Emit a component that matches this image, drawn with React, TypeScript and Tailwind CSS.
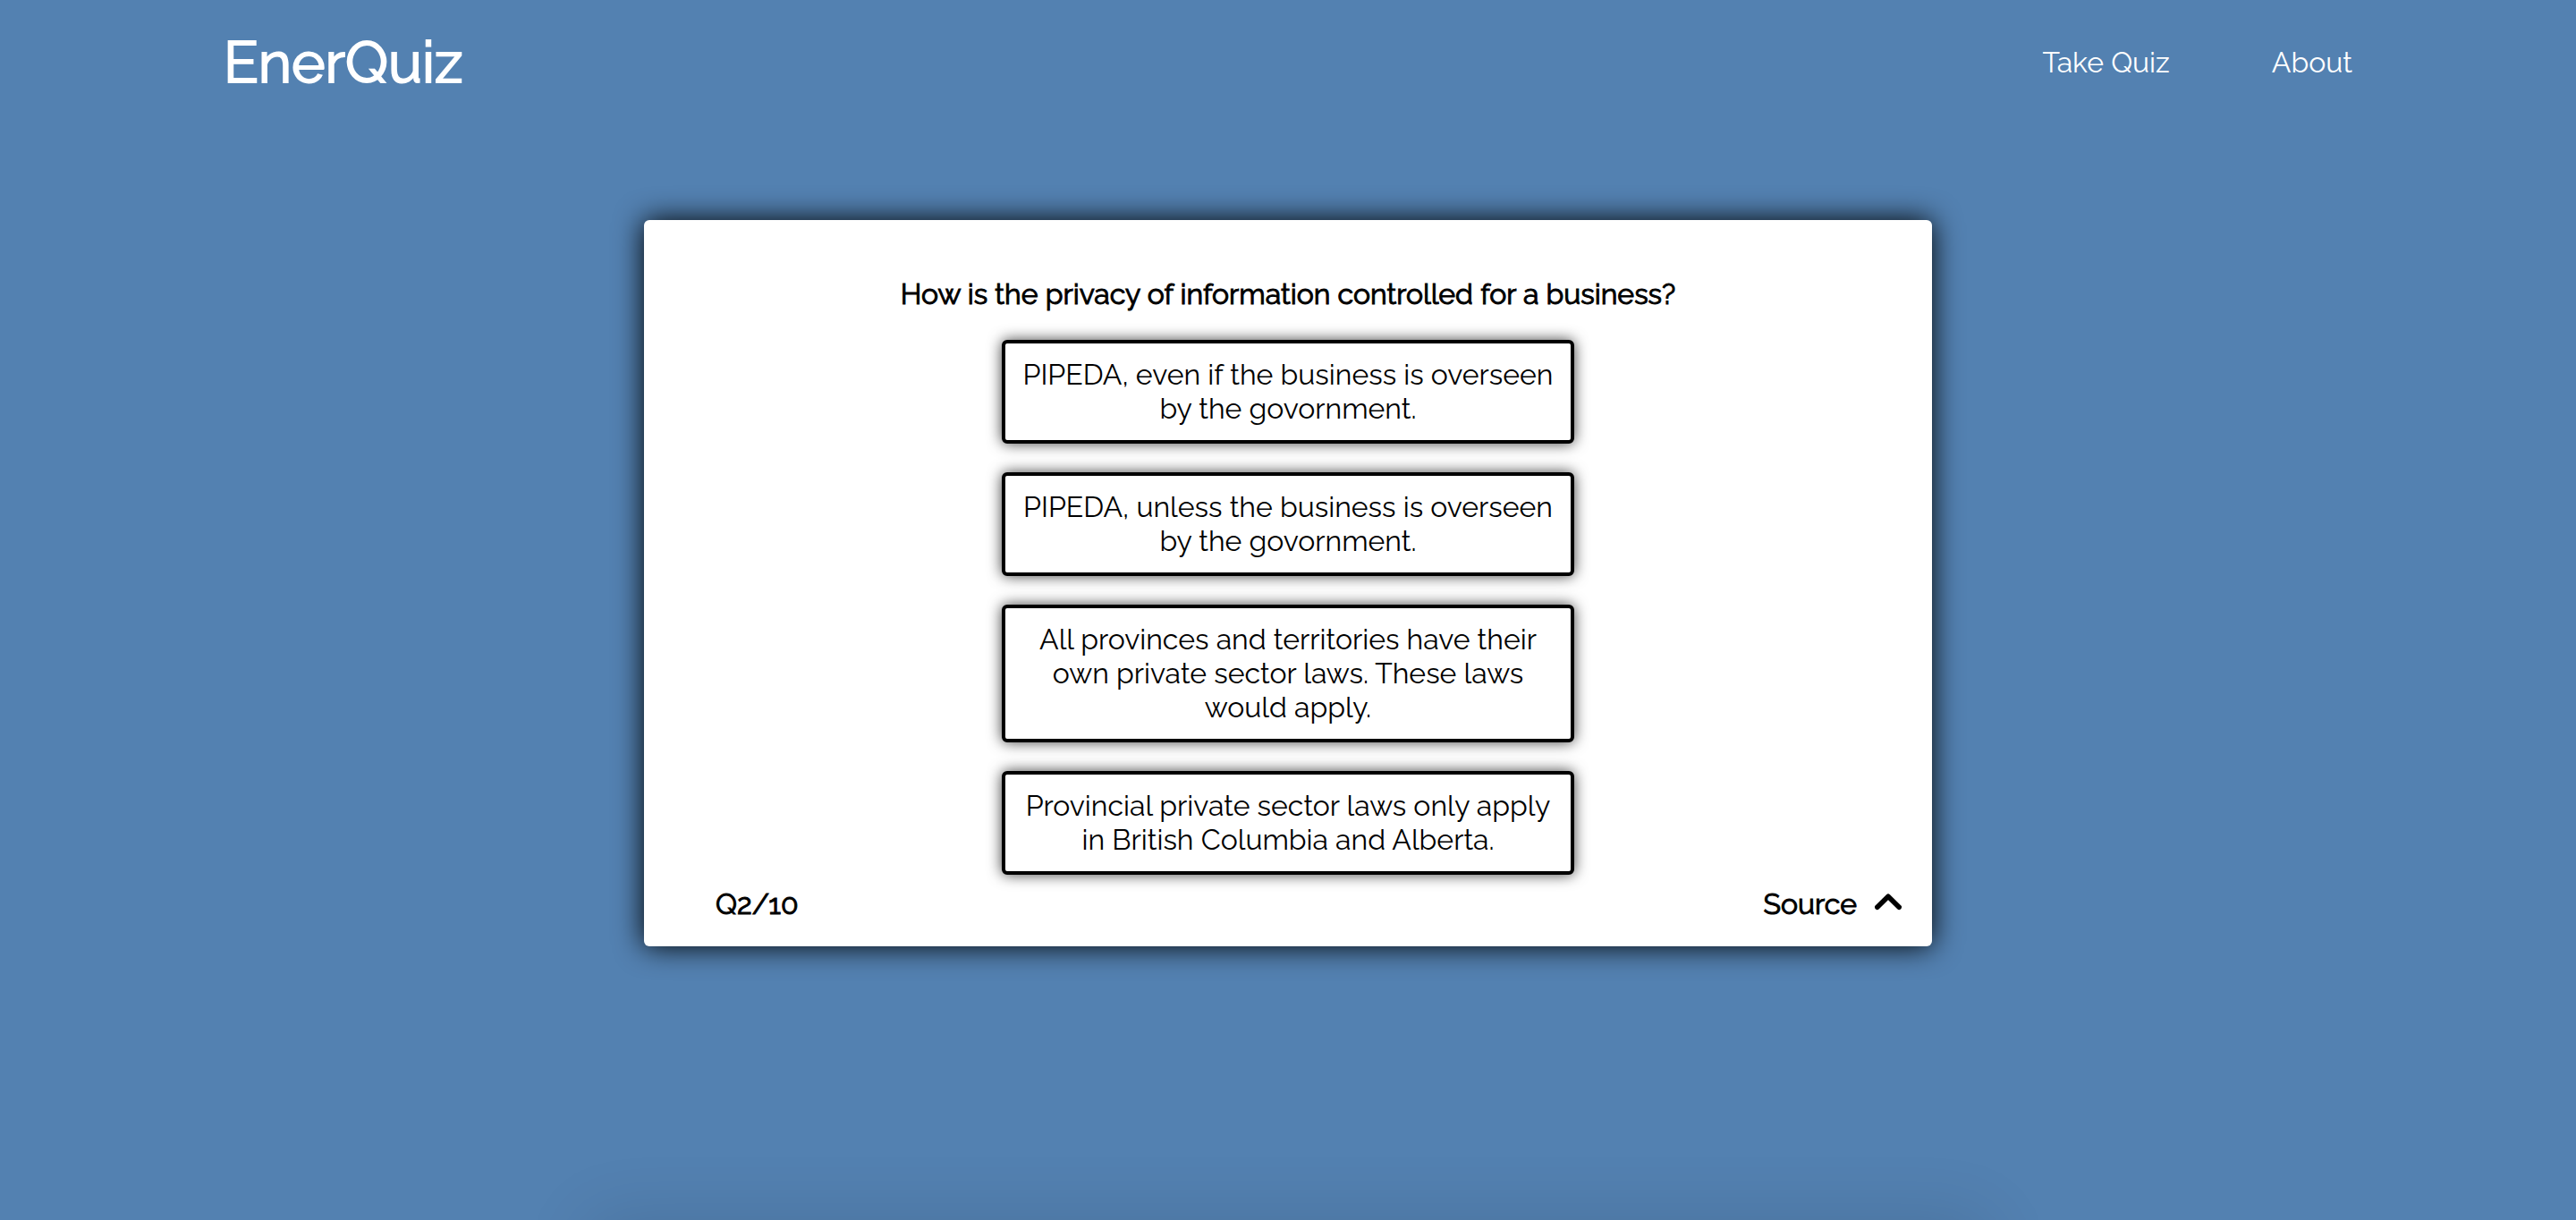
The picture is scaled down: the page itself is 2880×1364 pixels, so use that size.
import React from "react";

const options = [
  "PIPEDA, even if the business is overseen by the govornment.",
  "PIPEDA, unless the business is overseen by the govornment.",
  "All provinces and territories have their own private sector laws. These laws would apply.",
  "Provincial private sector laws only apply in British Columbia and Alberta.",
];

function Header() {
  return (
    <header className="flex h-[140px] items-center justify-between px-[250px] text-white">
      <a href="#home" className="text-[64px] leading-none [-webkit-text-stroke:2px_currentColor]">
        EnerQuiz
      </a>
      <nav className="flex gap-[114px]">
        <a href="#quiz">Take Quiz</a>
        <a href="#about">About</a>
      </nav>
    </header>
  );
}

function ChevronUp() {
  return (
    <svg viewBox="0 0 30 24" className="h-6 w-[30px]" fill="none" aria-hidden="true">
      <path
        d="M2.8 15.2 L15 3.2 L27.2 15.2"
        stroke="currentColor"
        strokeWidth="5.6"
        strokeLinecap="round"
        strokeLinejoin="round"
      />
    </svg>
  );
}

export default function App() {
  return (
    <div className="relative flex min-h-screen flex-col overflow-hidden bg-[#5381b1] font-['Raleway',sans-serif] text-[32px] leading-[38px] text-black">
      <Header />
      <main className="mx-auto mt-[106px] w-1/2 rounded-[6px] bg-white pt-16 pb-7 shadow-[0_0_32px_#000]">
        <h1 className="text-center [-webkit-text-stroke:1px_currentColor]">
          How is the privacy of information controlled for a business?
        </h1>
        <div className="mx-auto mt-8 flex w-[640px] flex-col gap-8">
          {options.map((option) => (
            <button
              key={option}
              type="button"
              className="rounded-[6px] border-4 border-black bg-white px-4 py-4 shadow-[0_0_16px_rgba(0,0,0,0.75)]"
            >
              {option}
            </button>
          ))}
        </div>
        <div className="mt-[14px] flex items-center justify-between pr-[34px] pl-20">
          <p className="[-webkit-text-stroke:1px_currentColor]">Q2/10</p>
          <button type="button" className="flex items-center gap-5">
            <span className="[-webkit-text-stroke:1px_currentColor]">Source</span>
            <ChevronUp />
          </button>
        </div>
      </main>
      <div className="absolute inset-x-0 top-full mx-auto h-40 w-[1560px] shadow-[0_0_80px_rgba(0,0,0,0.12)]" />
    </div>
  );
}
